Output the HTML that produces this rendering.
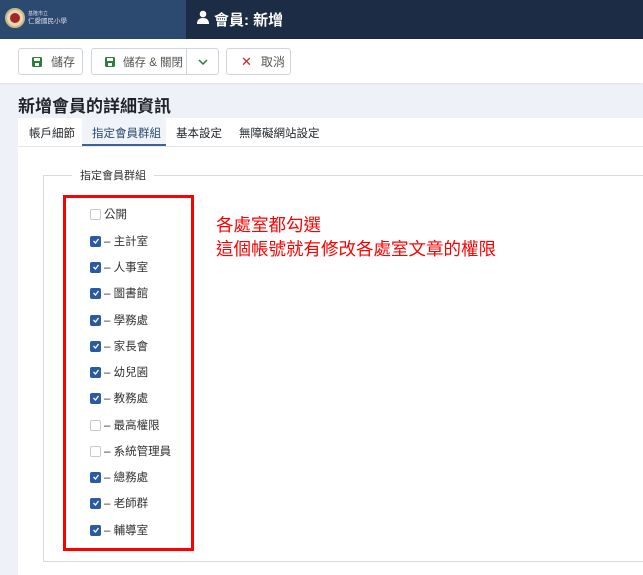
<!DOCTYPE html><html><head><meta charset="utf-8"><style>
*{box-sizing:border-box;margin:0;padding:0}
body{width:643px;height:575px;overflow:hidden;background:#eef2f8;font-family:"Liberation Sans","Noto Sans CJK TC",sans-serif;position:relative;color:#22262a}
.a{position:absolute}
.btn{position:absolute;top:48px;height:27px;background:#fff;border:1px solid #cfd5dc;border-radius:3px;font-size:12px;color:#555;display:flex;align-items:center}
.it{position:absolute;left:90px;font-size:11.5px;color:#333;display:flex;align-items:center;height:14px}
.cb{width:11px;height:11px;border-radius:2px;background:#2a5aa0;margin-right:3px;display:flex;align-items:center;justify-content:center}
.cb.u{background:#fff;border:1px solid #c5cad0}
.cb svg{width:8px;height:8px}
</style></head><body>
<div class="a" style="left:0;top:0;width:186px;height:39px;background:#2c4a70"></div>
<div class="a" style="left:186px;top:0;width:457px;height:39px;background:#1c2c45"></div>
<div class="a" style="left:5px;top:8px;width:20px;height:20px;border-radius:50%;background:#e8d9b0;border:2px solid #c9b98a"><div style="margin:3px auto;width:10px;height:10px;border-radius:50%;background:#a5242a"></div></div>
<div class="a" style="left:28px;top:11px;font-size:5px;color:#dde;line-height:7px">基隆市立<br><span style="font-size:6.5px">仁愛國民小學</span></div>
<svg class="a" style="left:197px;top:10px" width="12" height="14" viewBox="0 0 12 14"><circle cx="6" cy="4" r="3.3" fill="#fff"/><path d="M0 14 Q0 8 6 8 Q12 8 12 14Z" fill="#fff"/></svg>
<div class="a" style="left:214px;top:9px;font-size:15px;color:#fff;font-weight:bold">會員: 新增</div>
<div class="a" style="left:0;top:39px;width:643px;height:44px;background:#fff;box-shadow:0 1px 3px rgba(0,0,0,.06)"></div>
<div class="btn" style="left:18px;width:65px"><svg style="margin-left:13px" width="10" height="10" viewBox="0 0 10 10"><rect width="10" height="10" rx="1.5" fill="#2f7d3a"/><rect x="2" y="1" width="6" height="3" fill="#fff"/><rect x="3" y="6" width="4" height="3" fill="#fff"/></svg><span style="margin-left:9px">儲存</span></div>
<div class="btn" style="left:91px;width:128px"><svg style="margin-left:13px" width="10" height="10" viewBox="0 0 10 10"><rect width="10" height="10" rx="1.5" fill="#2f7d3a"/><rect x="2" y="1" width="6" height="3" fill="#fff"/><rect x="3" y="6" width="4" height="3" fill="#fff"/></svg><span style="margin-left:8px;font-size:11.5px">儲存 &amp; 關閉</span><div style="position:absolute;left:94px;top:0;bottom:0;border-left:1px solid #cfd5dc;width:32px;display:flex;align-items:center;justify-content:center;background:#fff;border-radius:0 3px 3px 0"><svg width="10" height="6" viewBox="0 0 10 6"><path d="M1 1l4 4 4-4" stroke="#2f7d3a" stroke-width="1.5" fill="none"/></svg></div></div>
<div class="btn" style="left:226px;width:65px"><span style="margin-left:14px;color:#c62828;font-size:13px">✕</span><span style="margin-left:9px">取消</span></div>
<div class="a" style="left:18px;top:92px;font-size:17px;font-weight:bold;color:#1f2327">新增會員的詳細資訊</div>
<div class="a" style="left:18px;top:118px;width:625px;height:457px;background:#fff"></div>
<div class="a" style="left:82px;top:118px;width:84px;height:28px;background:#f0f4f9;border-bottom:2px solid #3d6294"></div>
<div class="a" style="left:29px;top:125px;font-size:11.5px">帳戶細節</div>
<div class="a" style="left:92px;top:125px;font-size:11.5px;color:#2c4a70">指定會員群組</div>
<div class="a" style="left:176px;top:125px;font-size:11.5px">基本設定</div>
<div class="a" style="left:239px;top:125px;font-size:11.5px">無障礙網站設定</div>
<div class="a" style="left:18px;top:146px;width:625px;border-top:1px solid #e3e7ec"></div>
<div class="a" style="left:43px;top:175px;width:610px;height:387px;border:1px solid #d6dbe1"></div>
<div class="a" style="left:72px;top:167px;padding:0 8px;background:#fff;font-size:11px;color:#333">指定會員群組</div>
<div class="a" style="left:63px;top:195px;width:131px;height:356px;border:3px solid #f00"></div>
<div class="a" style="left:216px;top:213px;font-size:17.5px;color:#f00;line-height:24px">各處室都勾選<br>這個帳號就有修改各處室文章的權限</div>
<div class="it" style="top:207px"><div class="cb u"></div>公開</div>
<div class="it" style="top:234px"><div class="cb"><svg viewBox="0 0 8 8"><path d="M1.5 4l2 2 3-4" stroke="#fff" stroke-width="1.3" fill="none"/></svg></div>– 主計室</div>
<div class="it" style="top:260px"><div class="cb"><svg viewBox="0 0 8 8"><path d="M1.5 4l2 2 3-4" stroke="#fff" stroke-width="1.3" fill="none"/></svg></div>– 人事室</div>
<div class="it" style="top:286px"><div class="cb"><svg viewBox="0 0 8 8"><path d="M1.5 4l2 2 3-4" stroke="#fff" stroke-width="1.3" fill="none"/></svg></div>– 圖書館</div>
<div class="it" style="top:313px"><div class="cb"><svg viewBox="0 0 8 8"><path d="M1.5 4l2 2 3-4" stroke="#fff" stroke-width="1.3" fill="none"/></svg></div>– 學務處</div>
<div class="it" style="top:339px"><div class="cb"><svg viewBox="0 0 8 8"><path d="M1.5 4l2 2 3-4" stroke="#fff" stroke-width="1.3" fill="none"/></svg></div>– 家長會</div>
<div class="it" style="top:365px"><div class="cb"><svg viewBox="0 0 8 8"><path d="M1.5 4l2 2 3-4" stroke="#fff" stroke-width="1.3" fill="none"/></svg></div>– 幼兒園</div>
<div class="it" style="top:391px"><div class="cb"><svg viewBox="0 0 8 8"><path d="M1.5 4l2 2 3-4" stroke="#fff" stroke-width="1.3" fill="none"/></svg></div>– 教務處</div>
<div class="it" style="top:418px"><div class="cb u"></div>– 最高權限</div>
<div class="it" style="top:444px"><div class="cb u"></div>– 系統管理員</div>
<div class="it" style="top:470px"><div class="cb"><svg viewBox="0 0 8 8"><path d="M1.5 4l2 2 3-4" stroke="#fff" stroke-width="1.3" fill="none"/></svg></div>– 總務處</div>
<div class="it" style="top:496px"><div class="cb"><svg viewBox="0 0 8 8"><path d="M1.5 4l2 2 3-4" stroke="#fff" stroke-width="1.3" fill="none"/></svg></div>– 老師群</div>
<div class="it" style="top:523px"><div class="cb"><svg viewBox="0 0 8 8"><path d="M1.5 4l2 2 3-4" stroke="#fff" stroke-width="1.3" fill="none"/></svg></div>– 輔導室</div>
</body></html>
